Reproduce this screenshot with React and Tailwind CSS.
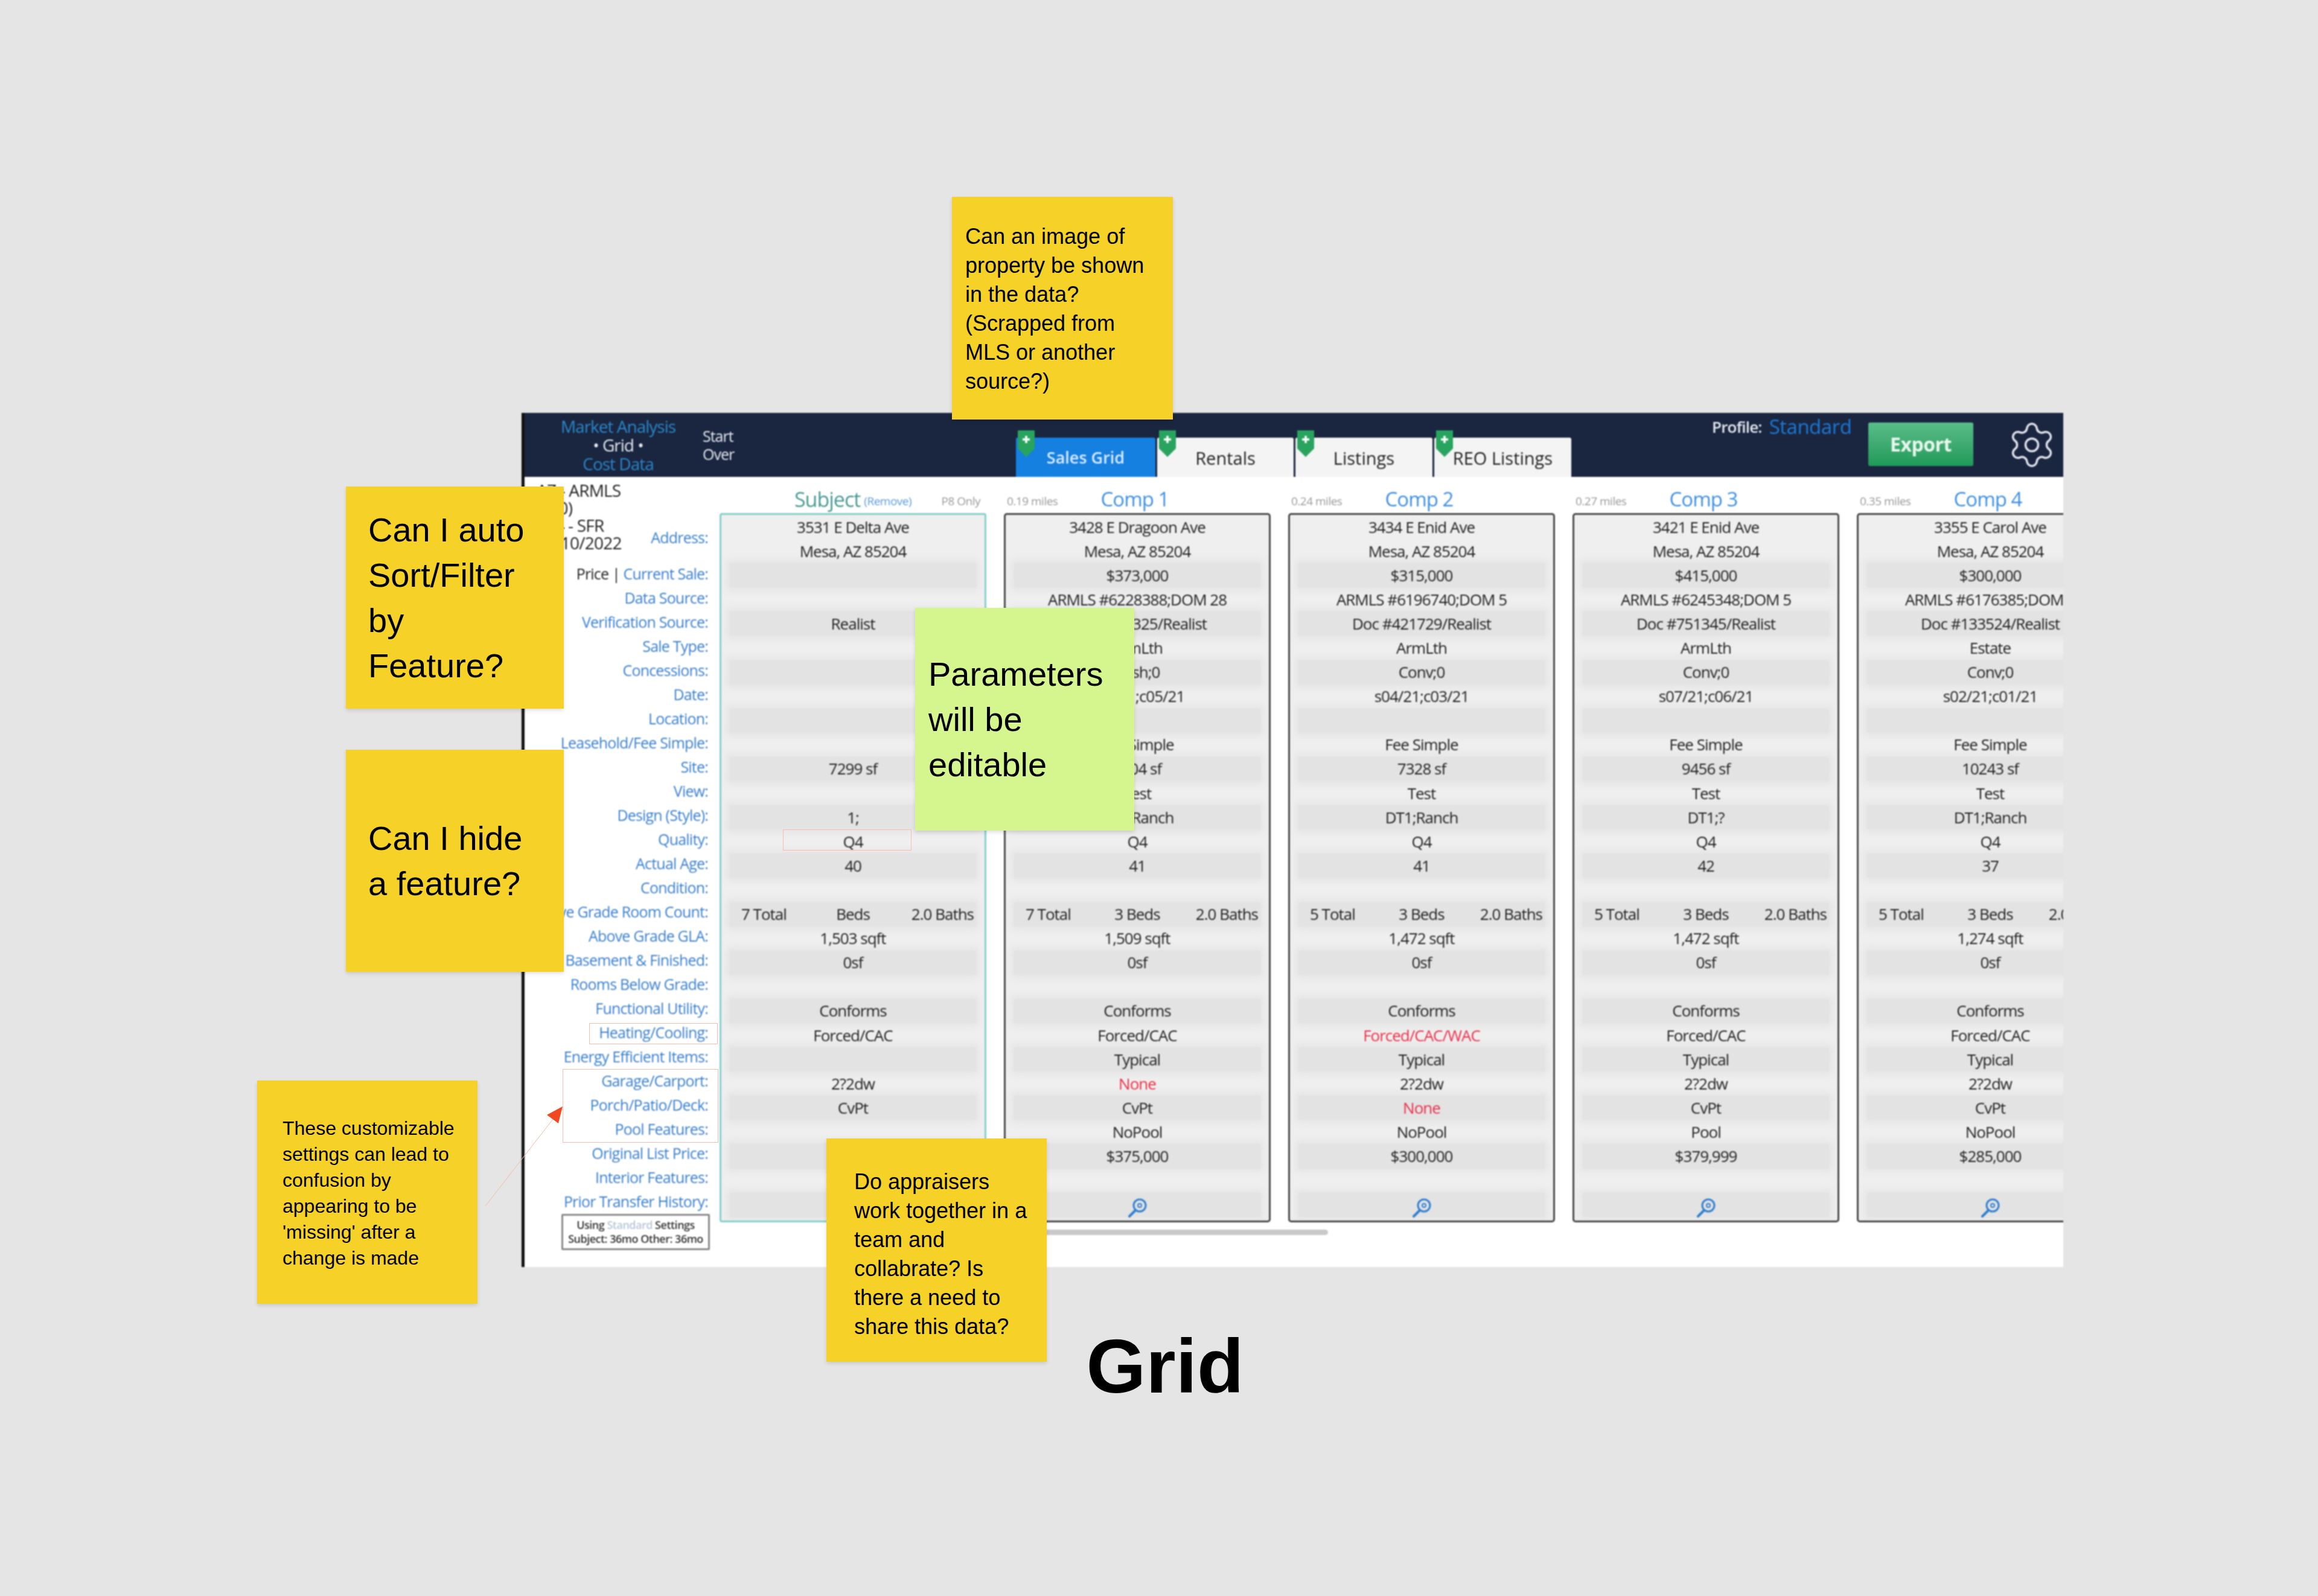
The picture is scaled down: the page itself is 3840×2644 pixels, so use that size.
import React from "react";
import { Settings } from "lucide-react";

const labels = [
  "Data Source:",
  "Verification Source:",
  "Sale Type:",
  "Concessions:",
  "Date:",
  "Location:",
  "Leasehold/Fee Simple:",
  "Site:",
  "View:",
  "Design (Style):",
  "Quality:",
  "Actual Age:",
  "Condition:",
  "Above Grade Room Count:",
  "Above Grade GLA:",
  "Basement & Finished:",
  "Rooms Below Grade:",
  "Functional Utility:",
  "Heating/Cooling:",
  "Energy Efficient Items:",
  "Garage/Carport:",
  "Porch/Patio/Deck:",
  "Pool Features:",
  "Original List Price:",
  "Interior Features:",
  "Prior Transfer History:",
];

const red = (t) => ({ red: t });

const subject = [
  "3531 E Delta Ave", "Mesa, AZ 85204", "", "", "Realist", "", "", "", "", "",
  "7299 sf", "", "1;", "Q4", "40", "", ["7 Total", "Beds", "2.0 Baths"],
  "1,503 sqft", "0sf", "", "Conforms", "Forced/CAC", "", "2?2dw", "CvPt", "", "", "", "",
];

const comps = [
  {
    title: "Comp 1",
    miles: "0.19 miles",
    rows: [
      "3428 E Dragoon Ave", "Mesa, AZ 85204", "$373,000", "ARMLS #6228388;DOM 28", "Doc #516325/Realist",
      "ArmLth", "Cash;0", "s06/21;c05/21", "", "Fee Simple", "7304 sf", "Test", "DT1;Ranch", "Q4", "41", "",
      ["7 Total", "3 Beds", "2.0 Baths"], "1,509 sqft", "0sf", "", "Conforms", "Forced/CAC", "Typical",
      red("None"), "CvPt", "NoPool", "$375,000", "", "",
    ],
  },
  {
    title: "Comp 2",
    miles: "0.24 miles",
    rows: [
      "3434 E Enid Ave", "Mesa, AZ 85204", "$315,000", "ARMLS #6196740;DOM 5", "Doc #421729/Realist",
      "ArmLth", "Conv;0", "s04/21;c03/21", "", "Fee Simple", "7328 sf", "Test", "DT1;Ranch", "Q4", "41", "",
      ["5 Total", "3 Beds", "2.0 Baths"], "1,472 sqft", "0sf", "", "Conforms", red("Forced/CAC/WAC"), "Typical",
      "2?2dw", red("None"), "NoPool", "$300,000", "", "",
    ],
  },
  {
    title: "Comp 3",
    miles: "0.27 miles",
    rows: [
      "3421 E Enid Ave", "Mesa, AZ 85204", "$415,000", "ARMLS #6245348;DOM 5", "Doc #751345/Realist",
      "ArmLth", "Conv;0", "s07/21;c06/21", "", "Fee Simple", "9456 sf", "Test", "DT1;?", "Q4", "42", "",
      ["5 Total", "3 Beds", "2.0 Baths"], "1,472 sqft", "0sf", "", "Conforms", "Forced/CAC", "Typical",
      "2?2dw", "CvPt", "Pool", "$379,999", "", "",
    ],
  },
  {
    title: "Comp 4",
    miles: "0.35 miles",
    rows: [
      "3355 E Carol Ave", "Mesa, AZ 85204", "$300,000", "ARMLS #6176385;DOM 5", "Doc #133524/Realist",
      "Estate", "Conv;0", "s02/21;c01/21", "", "Fee Simple", "10243 sf", "Test", "DT1;Ranch", "Q4", "37", "",
      ["5 Total", "3 Beds", "2.0 Baths"], "1,274 sqft", "0sf", "", "Conforms", "Forced/CAC", "Typical",
      "2?2dw", "CvPt", "NoPool", "$285,000", "", "",
    ],
  },
];

function Magnifier() {
  return (
    <svg className="mt-[10px]" width="32" height="32" viewBox="0 0 32 32" fill="none" stroke="#2f7fd0">
      <circle cx="20" cy="12" r="10" strokeWidth="3" />
      <circle cx="20" cy="12" r="3" strokeWidth="2" />
      <path d="M13 20 L3 30" strokeWidth="4" strokeLinecap="round" />
    </svg>
  );
}

function ValueRow({ value, index, icon }) {
  const stripe =
    index >= 2 && index % 2 === 0
      ? "mx-[14px] bg-[#e3e3e3] shadow-[0_0_12px_5px_#e4e4e4]"
      : "mx-[14px]";
  let inner = value;
  if (Array.isArray(value)) {
    inner = (
      <div className="w-full grid grid-cols-[1fr_auto_1fr]">
        <span className="text-left pl-[19px]">{value[0]}</span>
        <span>{value[1]}</span>
        <span className="text-right pr-[4px]">{value[2]}</span>
      </div>
    );
  } else if (value && value.red) {
    inner = <span className="text-[#e8304a]">{value.red}</span>;
  }
  return (
    <div className={"h-[40.1px] flex items-center justify-center whitespace-nowrap " + stripe}>
      {icon ? <Magnifier /> : inner}
    </div>
  );
}

function Tab({ children, active, className }) {
  return (
    <div
      className={
        "relative h-[65px] rounded-t-[3px] flex items-center justify-center pt-[2px] " +
        (active ? "bg-[#1580e0] text-[#dcecfb] font-semibold text-[27px] " : "bg-[#f4f4f4] text-[#222] text-[29px] ") +
        className
      }
    >
      <svg className="absolute left-[3px] top-[-12px]" width="28" height="44" viewBox="0 0 28 44">
        <path d="M0 0 H28 V30 L14 44 L0 30 Z" fill="#29a45f" />
        <path d="M14 9 V21 M8 15 H20" stroke="#fff" strokeWidth="3.5" />
      </svg>
      {children}
    </div>
  );
}

function Frame() {
  return (
    <div className="absolute left-[864px] top-[684px] w-[2554px] h-[1415px] bg-white border-l-[5px] border-[#111] overflow-hidden blur-[1px] font-['Open_Sans',sans-serif]">
      <div className="h-[106px] bg-[#1a2640] flex">
        <div className="w-[280px] ml-[15px] text-center text-[28px] leading-[31px] tracking-[-1px] pt-[7px]">
          <div className="text-[#2a86c8]">Market Analysis</div>
          <div className="text-[#e6eaf0] font-medium">• Grid •</div>
          <div className="text-[#2a86c8]">Cost Data</div>
        </div>
        <div className="w-[54px] text-[25px] leading-[30px] tracking-[-1px] text-[#e6eaf0] pt-[23px]">
          <div>Start</div>
          <div>Over</div>
        </div>
        <div className="ml-[465px] self-end flex gap-[3px] pt-[41px]">
          <Tab active className="w-[231px]">Sales Grid</Tab>
          <Tab className="w-[226px]">Rentals</Tab>
          <Tab className="w-[227px]">Listings</Tab>
          <Tab className="w-[227px]">REO Listings</Tab>
        </div>
        <div className="ml-[233px] w-[233px] flex items-center gap-[12px] h-[46px] whitespace-nowrap">
          <span className="text-[26px] font-semibold tracking-[-0.8px] text-[#e6eaf0]">Profile:</span>
          <span className="text-[33px] tracking-[-0.5px] text-[#1c78d4]">Standard</span>
        </div>
        <div className="ml-[26px] mt-[16px] w-[174px] h-[72px] rounded-[3px] bg-gradient-to-b from-[#58bd8a] to-[#1f9a58] flex items-center justify-center text-[32px] font-bold tracking-[-0.5px] text-[#e9f7ef]">
          Export
        </div>
        <div className="ml-[55px] mt-[11px] text-[#e4e8ee]">
          <Settings size={84} strokeWidth={1} />
        </div>
      </div>

      <div className="flex text-[26px] font-medium text-[#222] tracking-[-1px]">
        <div className="relative w-[304px] shrink-0 mr-[19px] pt-[61px] text-right text-[25px] tracking-[-0.8px] text-[#3a80cc] whitespace-nowrap">
          <div className="absolute left-[20px] top-[8px] text-[28px] leading-[29px] text-[#222] text-left">
            <div>AZ - ARMLS</div>
            <div className="pl-[29px]">(0)</div>
            <div>004 - SFR</div>
            <div>01/10/2022</div>
          </div>
          <div className="h-[80px] flex items-center justify-end">Address:</div>
          <div className="h-[40px] flex items-center justify-end">
            <span className="text-[#222]">Price |&nbsp;</span>Current Sale:
          </div>
          {labels.map((label) => (
            <div key={label} className="h-[40px] flex items-center justify-end">
              {label}
            </div>
          ))}
          <div className="ml-[61px] mr-[-3px] h-[60px] border-[3px] border-[#8a8a8a] rounded-[2px] text-center text-[18px] tracking-[-0.5px] leading-[23px] text-[#333] font-semibold pt-[4px]">
            <div>
              Using <span className="text-[#b9c6d6]">Standard</span> Settings
            </div>
            <div>Subject: 36mo Other: 36mo</div>
          </div>
        </div>

        <div>
          <div className="flex gap-[29px]">
            <div className="w-[442px] shrink-0">
              <div className="h-[60px] pt-[12px] grid grid-cols-[1fr_auto_1fr] items-center font-normal">
                <span />
                <span className="flex items-center gap-[6px] whitespace-nowrap">
                  <span className="text-[34px] tracking-[-1px] text-[#4a9a93]">Subject</span>
                  <span className="text-[19px] tracking-[-0.5px] text-[#5a9bd5] pt-[6px]">(Remove)</span>
                </span>
                <span className="text-right pr-[10px] pt-[6px] text-[19px] tracking-[-0.5px] text-[#999] whitespace-nowrap">P8 Only</span>
              </div>
              <div className="h-[1175px] border-[3px] border-[#84cfcb] rounded-[4px] bg-[#efefef] overflow-hidden">
                {subject.map((v, i) => (
                  <ValueRow key={i} value={v} index={i} />
                ))}
              </div>
            </div>

            {comps.map((c) => (
              <div key={c.title} className="w-[442px] shrink-0">
                <div className="h-[60px] pt-[12px] grid grid-cols-[1fr_auto_1fr] items-center font-normal">
                  <span className="pl-[5px] pt-[6px] text-[19px] tracking-[-0.5px] text-[#999] whitespace-nowrap">{c.miles}</span>
                  <span className="text-[33px] tracking-[-1px] text-[#3d8fe0] pr-[8px] whitespace-nowrap">{c.title}</span>
                  <span />
                </div>
                <div className="h-[1175px] border-[3px] border-[#4a4a4a] rounded-[5px] bg-[#efefef] overflow-hidden">
                  {c.rows.map((v, i) => (
                    <ValueRow key={i} value={v} index={i} icon={i === 28} />
                  ))}
                </div>
              </div>
            ))}
          </div>
          <div className="ml-[500px] mt-[12px] w-[508px] h-[9px] rounded-full bg-[#c9c9c9]" />
        </div>
      </div>
    </div>
  );
}

function Note({ className, children }) {
  return (
    <div
      className={
        "absolute flex items-center text-black shadow-[0_3px_6px_rgba(0,0,0,0.12)] font-['Liberation_Sans',sans-serif] " +
        className
      }
    >
      <div>{children}</div>
    </div>
  );
}

function Marks() {
  return (
    <>
      <div className="absolute left-[1297px] top-[1374px] w-[213px] h-[35px] border border-[#f9bdb0]" />
      <div className="absolute left-[976px] top-[1695px] w-[213px] h-[35px] border border-[#f9bdb0]" />
      <div className="absolute left-[932px] top-[1771px] w-[258px] h-[122px] border border-[#f9bdb0]" />
      <svg className="absolute left-[800px] top-[1830px]" width="140" height="172" viewBox="800 1830 140 172">
        <path d="M804 1998 L916 1854" stroke="#f7b8a8" strokeWidth="1" />
        <path d="M932 1833 L906 1847 L925 1861 Z" fill="#f24822" />
      </svg>
    </>
  );
}

export default function App() {
  return (
    <div className="relative w-[3840px] h-[2644px] bg-[#e5e5e5] overflow-hidden">
      <Frame />
      <Marks />

      <Note className="left-[1577px] top-[326px] w-[366px] h-[369px] pl-[22px] pt-[3px] bg-[#f6d128] text-[36px] leading-[48px]">
        Can an image of
        <br />
        property be shown
        <br />
        in the data?
        <br />
        (Scrapped from
        <br />
        MLS or another
        <br />
        source?)
      </Note>
      <Note className="left-[573px] top-[806px] w-[361px] h-[368px] pl-[37px] bg-[#f6d128] text-[56px] leading-[75px]">
        Can I auto
        <br />
        Sort/Filter
        <br />
        by
        <br />
        Feature?
      </Note>
      <Note className="left-[573px] top-[1242px] w-[361px] h-[368px] pl-[37px] bg-[#f6d128] text-[56px] leading-[75px]">
        Can I hide
        <br />a feature?
      </Note>
      <Note className="left-[1516px] top-[1007px] w-[363px] h-[369px] pl-[22px] bg-[#d5f68e] text-[56px] leading-[75px]">
        Parameters
        <br />
        will be
        <br />
        editable
      </Note>
      <Note className="left-[426px] top-[1790px] w-[365px] h-[370px] pl-[42px] pt-[4px] bg-[#f6d128] text-[32px] leading-[43px]">
        These customizable
        <br />
        settings can lead to
        <br />
        confusion by
        <br />
        appearing to be
        <br />
        'missing' after a
        <br />
        change is made
      </Note>
      <Note className="left-[1369px] top-[1886px] w-[365px] h-[370px] pl-[46px] pt-[14px] bg-[#f6d128] text-[36px] leading-[48px]">
        Do appraisers
        <br />
        work together in a
        <br />
        team and
        <br />
        collabrate? Is
        <br />
        there a need to
        <br />
        share this data?
      </Note>

      <div className="absolute left-[1630px] w-[600px] top-[2188px] text-center font-['Liberation_Sans',sans-serif] font-bold text-[127px] leading-[150px] text-black">
        Grid
      </div>
    </div>
  );
}
